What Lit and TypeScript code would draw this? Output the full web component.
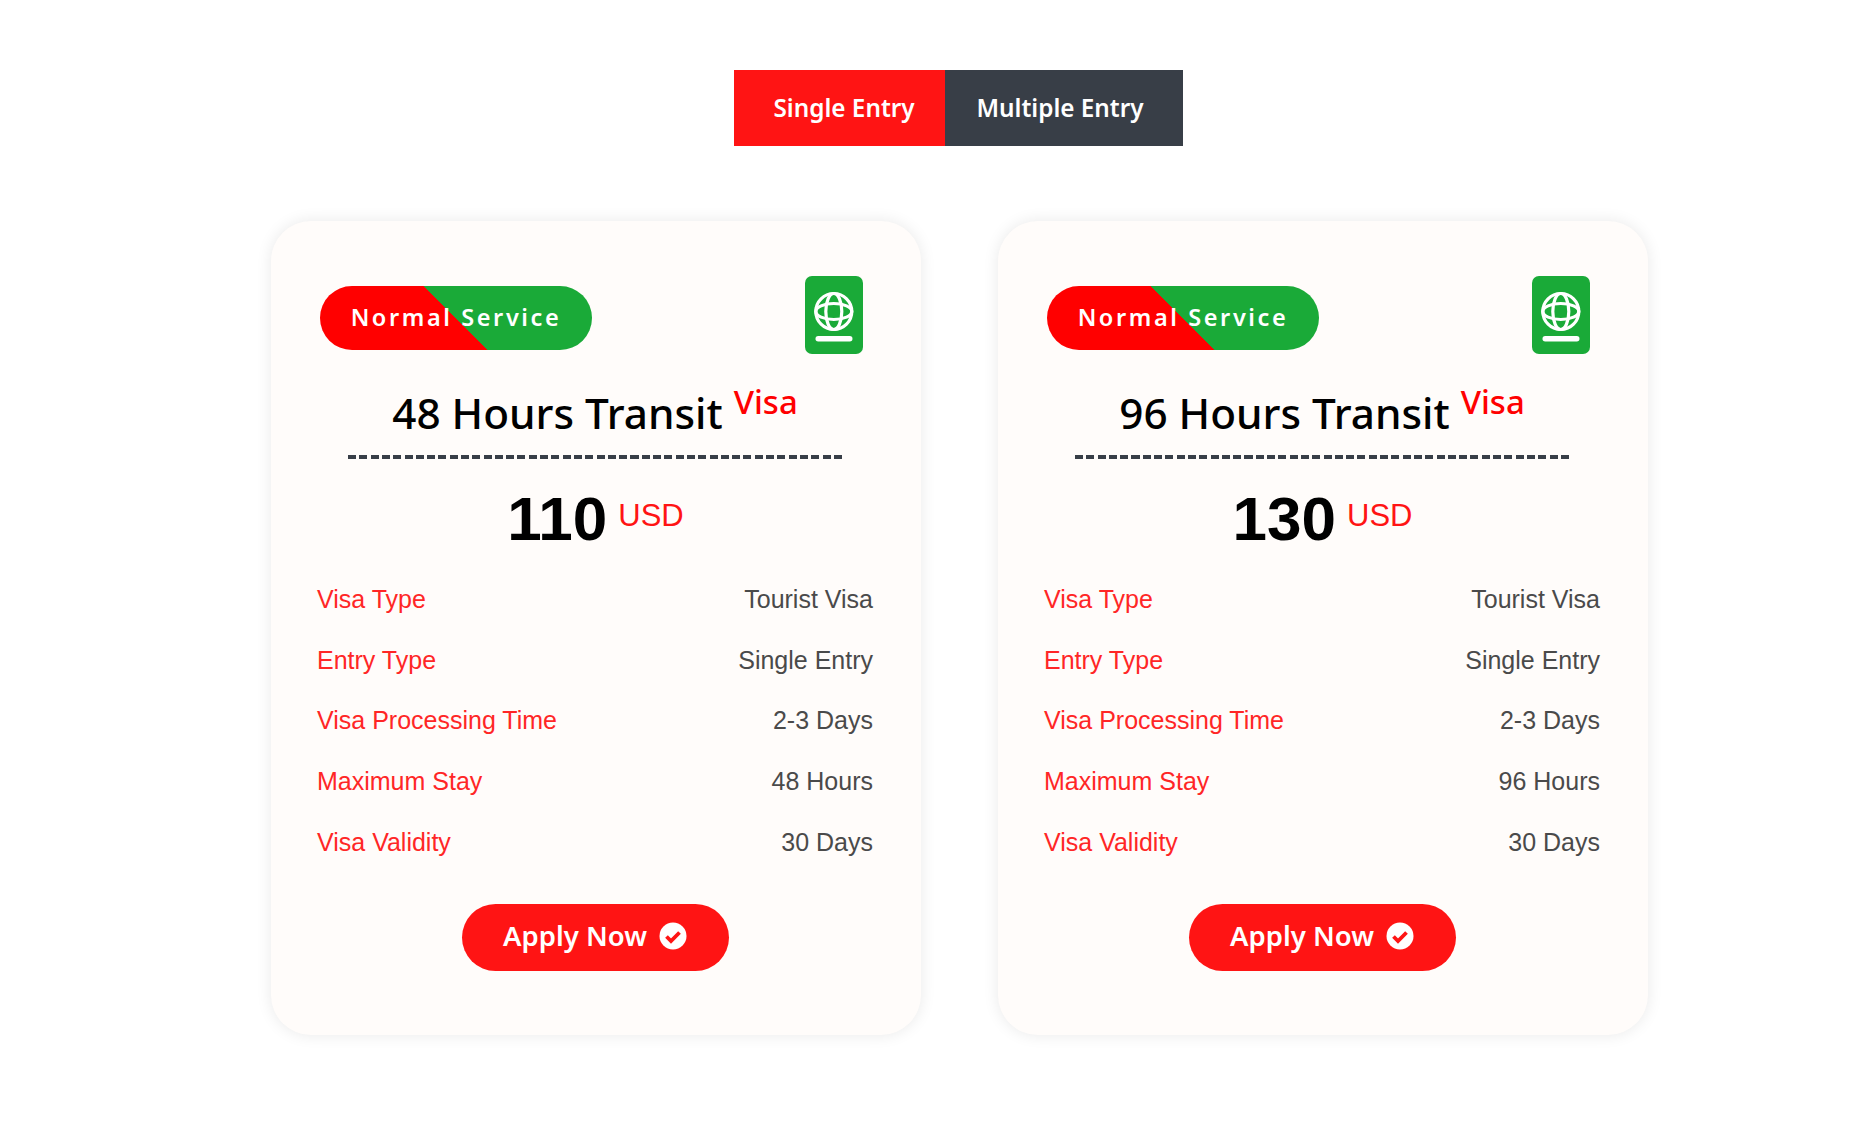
import { LitElement, html, css } from "lit";
import { customElement } from "lit/decorators.js";

interface Plan { hours: string; price: string; }
const plans: Plan[] = [
  { hours: "48", price: "110" },
  { hours: "96", price: "130" },
];

@customElement("app-root")
export class AppRoot extends LitElement {
  static styles = css`
    :host { display: block; width: 1876px; height: 1126px; background: #fff; font-family: "Liberation Sans", sans-serif; overflow: hidden; }
    .page { padding: 70px 0 0 271px; box-sizing: border-box; }
    .tabs { display: flex; margin-left: 462.5px; height: 76px; width: 449.5px; font-family: "Noto Sans", sans-serif; font-size: 24.3px; font-weight: 600; color: #fff; }
    .tab { display: flex; align-items: center; box-sizing: border-box; padding-bottom: 2px; }
    .tab.on { width: 211px; background: #ff1414; padding-left: 40px; }
    .tab.off { width: 238.5px; background: #383e47; padding-left: 32px; }
    .cards { display: flex; gap: 77px; margin-top: 75px; }
    .card { width: 650px; height: 814px; box-sizing: border-box; background: #fffcfa; border-radius: 40px; box-shadow: 0 0 16px rgba(0,0,0,.09); padding: 55px 48px 0 46px; display: flex; flex-direction: column; }
    .top { display: flex; justify-content: space-between; align-items: flex-start; padding: 0 0 0 3px; margin-right: 10px; }
    .badge { margin-top: 10px; width: 272px; height: 64px; padding-bottom: 2px; box-sizing: border-box; border-radius: 32px; display: flex; align-items: center; justify-content: center; color: #fff; font-family: "Noto Sans", sans-serif; font-size: 23.5px; font-weight: 600; letter-spacing: 2.6px; background: linear-gradient(45deg, #f00 0 50%, #1aaa38 50%); }
    .pass { display: block; width: 58px; height: 78px; }
    .title { margin: 30px 0 0; text-align: center; font-family: "Noto Sans", sans-serif; font-size: 42.3px; font-weight: 500; line-height: 58px; color: #000; white-space: nowrap; }
    .title sup { font-size: 33px; font-weight: 500; color: #f00; line-height: 0; position: relative; top: -3px; vertical-align: 12px; }
    .dash { margin: 13px 30px 0 31px; height: 4px; background: repeating-linear-gradient(to right, #383e47 0 8px, transparent 8px 11.3px); }
    .price { margin-top: 18px; padding-left: 1px; text-align: center; font-size: 62px; font-weight: 700; line-height: 78px; color: #000; }
    .price span { font-size: 31px; font-weight: 400; color: #ff1414; margin-left: 11px; vertical-align: 14px; }
    .rows { margin-top: 11px; display: flex; flex-direction: column; }
    .row { height: 60.8px; display: flex; justify-content: space-between; align-items: center; font-size: 25px; }
    .row b { font-weight: 400; color: #ff2626; }
    .row span { color: #4a4a4a; }
    .apply { align-self: center; margin-top: 31px; width: 267px; height: 67px; padding-bottom: 3px; box-sizing: border-box; border-radius: 34px; background: #ff1414; color: #fff; display: flex; align-items: center; justify-content: center; gap: 12px; font-family: "Noto Sans", sans-serif; font-size: 27.5px; font-weight: 600; }
    .apply svg { display: block; width: 28px; height: 28px; }
  `;

  private passport() {
    return html`<svg class="pass" viewBox="0 0 58 78">
      <rect width="58" height="78" rx="7" fill="#1aaa38"/>
      <g fill="none" stroke="#fff" stroke-width="3.2">
        <circle cx="28.8" cy="35.5" r="18"/>
        <ellipse cx="28.8" cy="35.5" rx="8" ry="18"/>
        <ellipse cx="28.8" cy="35.5" rx="18" ry="8"/>
      </g>
      <rect x="10.5" y="60" width="37" height="5.5" rx="2.7" fill="#fff"/>
    </svg>`;
  }

  private check() {
    return html`<svg viewBox="0 0 28 28">
      <circle cx="14" cy="14" r="13.5" fill="#fff"/>
      <path d="M7.5 14.5 L12 19 L20.5 10.5" fill="none" stroke="#ff1414" stroke-width="3.8"/>
    </svg>`;
  }

  private card(p: Plan) {
    const rows = [
      ["Visa Type", "Tourist Visa"],
      ["Entry Type", "Single Entry"],
      ["Visa Processing Time", "2-3 Days"],
      ["Maximum Stay", `${p.hours} Hours`],
      ["Visa Validity", "30 Days"],
    ];
    return html`<div class="card">
      <div class="top"><div class="badge">Normal Service</div>${this.passport()}</div>
      <h2 class="title">${p.hours} Hours Transit <sup>Visa</sup></h2>
      <div class="dash"></div>
      <div class="price">${p.price}<span>USD</span></div>
      <div class="rows">
        ${rows.map(([k, v]) => html`<div class="row"><b>${k}</b><span>${v}</span></div>`)}
      </div>
      <div class="apply">Apply Now ${this.check()}</div>
    </div>`;
  }

  render() {
    return html`<div class="page">
      <div class="tabs"><div class="tab on">Single Entry</div><div class="tab off">Multiple Entry</div></div>
      <div class="cards">${plans.map((p) => this.card(p))}</div>
    </div>`;
  }
}
